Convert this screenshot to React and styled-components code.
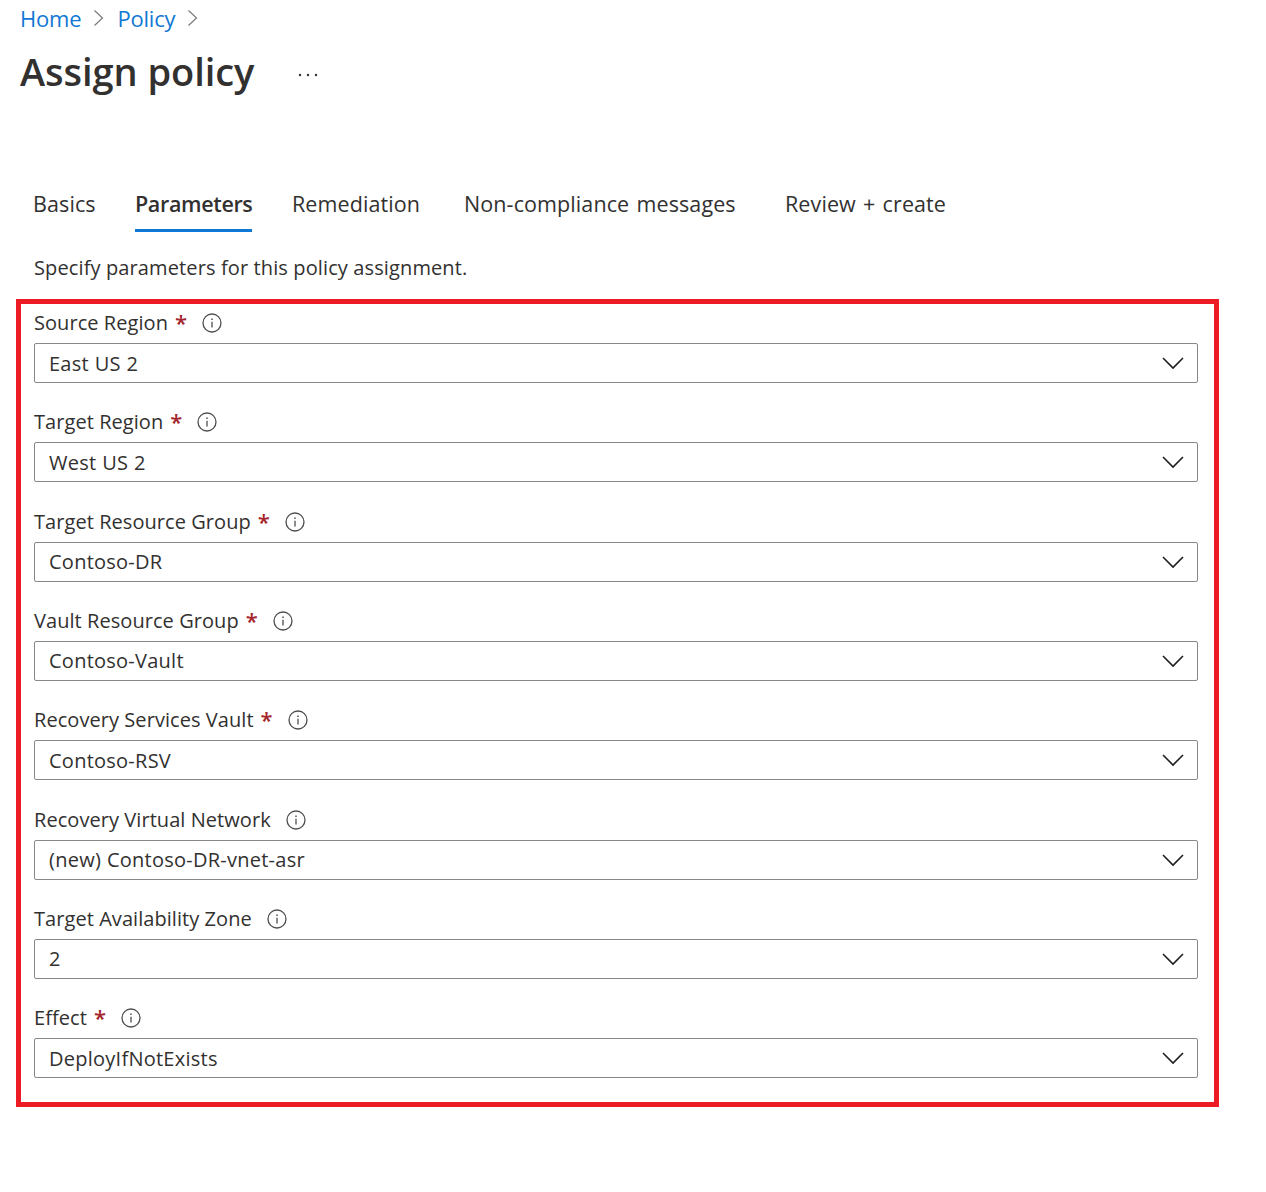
import React from "react";
import styled, { createGlobalStyle } from "styled-components";

const Global = createGlobalStyle`
  html, body { margin: 0; padding: 0; background: #fff; }
  body { font-family: "Open Sans", "Noto Sans", sans-serif; color: #323130; }
`;

const Page = styled.div`
  width: 1266px;
  height: 1192px;
  padding: 4px 0 0 20px;
  box-sizing: border-box;
  overflow: hidden;
`;
const Crumbs = styled.nav`
  display: flex;
  align-items: center;
  height: 28px;
  font-size: 22px;
  letter-spacing: -0.2px;
`;
const CrumbLink = styled.a`
  color: #0f78d4;
`;
const CrumbSep = styled.svg`
  width: 12px;
  height: 18px;
  margin: 0 12px;
  fill: none;
  stroke: #7a7a7a;
  stroke-width: 1.2;
`;
const TitleRow = styled.div`
  display: flex;
  align-items: center;
  height: 52px;
  margin-top: 13px;
`;
const Title = styled.h1`
  margin: 0;
  font-size: 38px;
  font-weight: 600;
  letter-spacing: -0.05px;
  line-height: 52px;
  width: 278px;
  color: #323130;
  white-space: nowrap;
`;
const More = styled.svg`
  width: 20px;
  height: 4px;
  margin-top: 8px;
  fill: #323130;
`;
const Tabs = styled.div`
  display: flex;
  margin: 82px 0 0 13px;
  height: 53px;
`;
const Tab = styled.div`
  width: ${(p) => p.$w}px;
  margin-right: ${(p) => p.$after}px;
  height: 50px;
  line-height: 50px;
  font-size: 21.5px;
  letter-spacing: ${(p) => (p.$active ? "-0.35px" : "0.1px")};
  word-spacing: 1.5px;
  white-space: nowrap;
  font-weight: ${(p) => (p.$active ? 600 : 400)};
  color: #323130;
  border-bottom: 3px solid ${(p) => (p.$active ? "#0f78d4" : "transparent")};
`;
const Description = styled.p`
  margin: 22px 0 0 14px;
  height: 28px;
  line-height: 28px;
  font-size: 20px;
  letter-spacing: 0.12px;
  white-space: nowrap;
`;
const Highlight = styled.section`
  box-sizing: border-box;
  width: 1203px;
  height: 808px;
  margin: 17px 0 0 -4px;
  padding: 6px 16px 0 13px;
  border: 5px solid #ed1c24;
`;
const Field = styled.div`
  height: 99.33px;
`;
const LabelRow = styled.div`
  display: flex;
  align-items: flex-start;
  height: 33px;
  line-height: 25px;
  font-size: 20px;
  letter-spacing: 0.06px;
  white-space: nowrap;
`;
const Required = styled.span`
  color: #a4262c;
  font-size: 22px;
  font-weight: 600;
  margin-left: 7px;
  line-height: 25px;
`;
const InfoIcon = styled.svg`
  width: 20px;
  height: 20px;
  margin-top: 3px;
  margin-left: 15px;
  fill: none;
  stroke: #504e4c;
`;
const Select = styled.div`
  box-sizing: border-box;
  height: 40px;
  border: 1px solid #8a8886;
  border-radius: 2px;
  display: flex;
  align-items: center;
  justify-content: space-between;
  padding: 0 13px 0 14px;
  font-size: 20px;
  letter-spacing: 0.25px;
  word-spacing: 0.4px;
`;
const Chevron = styled.svg`
  width: 22px;
  height: 14px;
  fill: none;
  stroke: #201f1e;
  stroke-width: 1.6;
`;

const tabs = [
  { t: "Basics", w: 60, after: 42 },
  { t: "Parameters", w: 117, after: 40, active: true },
  { t: "Remediation", w: 127, after: 45 },
  { t: "Non-compliance messages", w: 274, after: 47 },
  { t: "Review + create", w: 161, after: 0 },
];

const fields = [
  { label: "Source Region", req: true, value: "East US 2" },
  { label: "Target Region", req: true, value: "West US 2" },
  { label: "Target Resource Group", req: true, value: "Contoso-DR" },
  { label: "Vault Resource Group", req: true, value: "Contoso-Vault" },
  { label: "Recovery Services Vault", req: true, value: "Contoso-RSV" },
  { label: "Recovery Virtual Network", value: "(new) Contoso-DR-vnet-asr" },
  { label: "Target Availability Zone", value: "2" },
  { label: "Effect", req: true, value: "DeployIfNotExists" },
];

const Sep = () => (
  <CrumbSep viewBox="0 0 12 18">
    <path d="M1.5 1.5 L9.5 9 L1.5 16.5" />
  </CrumbSep>
);

export default function App() {
  return (
    <Page>
      <Global />
      <Crumbs>
        <CrumbLink>Home</CrumbLink>
        <Sep />
        <CrumbLink>Policy</CrumbLink>
        <Sep />
      </Crumbs>
      <TitleRow>
        <Title>Assign policy</Title>
        <More viewBox="0 0 20 4">
          <circle cx="2" cy="2" r="1.2" />
          <circle cx="10" cy="2" r="1.2" />
          <circle cx="18" cy="2" r="1.2" />
        </More>
      </TitleRow>
      <Tabs>
        {tabs.map((t) => (
          <Tab key={t.t} $w={t.w} $after={t.after} $active={t.active}>
            {t.t}
          </Tab>
        ))}
      </Tabs>
      <Description>Specify parameters for this policy assignment.</Description>
      <Highlight>
        {fields.map((f) => (
          <Field key={f.label}>
            <LabelRow>
              {f.label}
              {f.req && <Required>*</Required>}
              <InfoIcon viewBox="0 0 20 20">
                <circle cx="10" cy="10" r="9" strokeWidth="1.3" />
                <path d="M10 8.8 V14.5" strokeWidth="1.3" />
                <path d="M10 5.6 V7" strokeWidth="1.5" />
              </InfoIcon>
            </LabelRow>
            <Select>
              {f.value}
              <Chevron viewBox="0 0 22 14">
                <path d="M1 2 L11 12 L21 2" />
              </Chevron>
            </Select>
          </Field>
        ))}
      </Highlight>
    </Page>
  );
}
